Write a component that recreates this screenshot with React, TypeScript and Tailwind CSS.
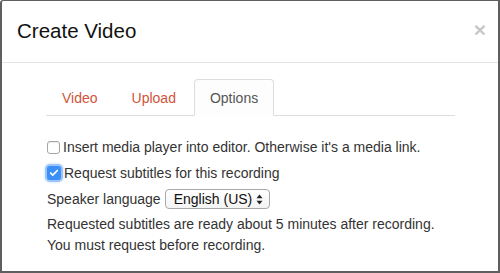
import { Check } from 'lucide-react';

const tabs = ['Video', 'Upload', 'Options'];

const App = () => {
  const active = 'Options';

  return (
    <div className="w-[500px] h-[273px] bg-white font-['Liberation_Sans',Arial,sans-serif] text-[14px] text-[#333] overflow-hidden">
      <div className="h-full border-t border-l-2 border-r-2 border-b-2 border-[#5f5f5f] rounded-tl-[3px] flex flex-col">
        {/* header */}
        <div className="h-[62px] shrink-0 border-b border-[#e5e5e5] flex items-center justify-between pl-[15px] pr-[12px]">
          <h4 className="text-[20.5px] text-[#111] leading-none">Create Video</h4>
          <button className="text-[21px] font-bold leading-none text-[#c8c8c8] -mt-[4px]" aria-label="Close">
            ×
          </button>
        </div>

        {/* body */}
        <div className="pl-[44px] pr-[43px] pt-[16px]">
          <ul className="flex border-b border-[#ddd] h-[37px]">
            {tabs.map((t) => (
              <li key={t} className="mr-[2px] -mb-px">
                <a
                  className={
                    t === active
                      ? 'h-[37px] flex items-center px-[15px] border border-[#ddd] border-b-transparent rounded-t-[4px] bg-[#fdfdfd] text-[#555] leading-[20px]'
                      : 'h-[37px] flex items-center px-[15px] border border-transparent text-[#d0553a] leading-[20px]'
                  }
                >
                  {t}
                </a>
              </li>
            ))}
          </ul>

          <div className="pt-[21px] pl-[1px] flex flex-col leading-[20px]">
            <label className="flex items-center h-[20px]">
              <span className="w-[13px] h-[13px] rounded-[3px] border border-[#a6a6a6] bg-white mr-[3px] shadow-[inset_0_1px_1px_rgba(0,0,0,0.08)]"></span>
              Insert media player into editor. Otherwise it's a media link.
            </label>
            <label className="flex items-center h-[20px] mt-[6px]">
              <span className="w-[14px] h-[14px] rounded-[3px] bg-[#3b8ff6] mr-[3px] flex items-center justify-center shadow-[0_0_0_2px_#9cc4f8,0_0_3px_2px_#b9d6fb]">
                <Check className="w-[10px] h-[10px] text-white" strokeWidth={4} />
              </span>
              Request subtitles for this recording
            </label>
            <div className="flex items-center h-[20px] mt-[6px]">
              <span className="mr-[4px]">Speaker language</span>
              <div className="w-[105px] h-[20px] rounded-[4px] border border-[#a9a9a9] bg-gradient-to-b from-white to-[#f4f4f4] flex items-center justify-between pl-[8px] pr-[6px] text-[#111]">
                <span>English (US)</span>
                <svg width="7" height="11" viewBox="0 0 7 11" className="text-[#222]">
                  <path d="M3.5 0.5 L6.5 4.2 L0.5 4.2 Z" fill="currentColor" />
                  <path d="M3.5 10.5 L6.5 6.8 L0.5 6.8 Z" fill="currentColor" />
                </svg>
              </div>
            </div>
            <p className="mt-[5px] leading-[21px]">
              Requested subtitles are ready about 5 minutes after recording.
              <br />
              You must request before recording.
            </p>
          </div>
        </div>
      </div>
    </div>
  );
};

export default App;
